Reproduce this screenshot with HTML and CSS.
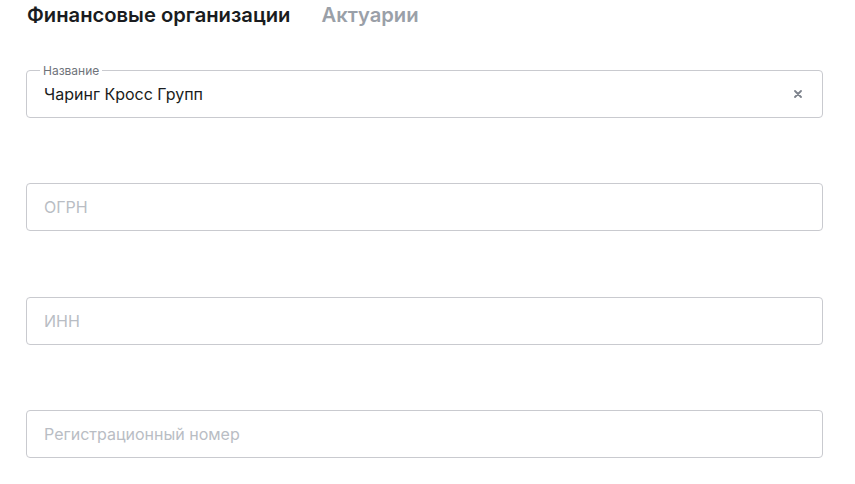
FILE: index.html
```html
<!DOCTYPE html>
<html lang="ru">
<head>
<meta charset="utf-8">
<link rel="stylesheet" href="styles.css">
</head>
<body>
<div class="page">
  <div class="tabs">
    <span class="tab active">Финансовые организации</span>
    <span class="tab">Актуарии</span>
  </div>
  <div class="fields">
    <div class="field filled">
      <span class="label">Название</span>
      <span class="value">Чаринг Кросс Групп</span>
      <span class="clear">
        <svg width="8" height="8" viewBox="0 0 8 8"><path d="M1 1L7 7M7 1L1 7" stroke="#7d828c" stroke-width="1.8" stroke-linecap="round"/></svg>
      </span>
    </div>
    <div class="field"><span class="placeholder">ОГРН</span></div>
    <div class="field"><span class="placeholder">ИНН</span></div>
    <div class="field"><span class="placeholder">Регистрационный номер</span></div>
  </div>
</div>
</body>
</html>
```
FILE: styles.css
```css
html, body {
  margin: 0;
  padding: 0;
  background: #fff;
}
body {
  font-family: Inter, "Noto Sans", sans-serif;
  color: #1a1c20;
}
.page {
  width: 797px;
  padding: 0 0 0 26px;
}
.tabs {
  display: flex;
  gap: 31px;
  height: 28px;
  align-items: center;
  padding-left: 1px;
}
.tab {
  font-size: 20.2px;
  font-weight: 600;
  color: #9aa0a8;
}
.tab.active {
  color: #1a1c20;
}
.fields {
  display: flex;
  flex-direction: column;
  gap: 65.4px;
  margin-top: 42px;
}
.field {
  position: relative;
  height: 46px;
  border: 1px solid #c9cacf;
  border-radius: 4px;
  display: flex;
  align-items: center;
  padding: 0 17px;
}
.placeholder {
  font-size: 16px;
  color: #b9bdc4;
}
.value {
  font-size: 16px;
  color: #1a1c20;
  flex: 1;
}
.label {
  position: absolute;
  left: 13px;
  top: -7px;
  padding: 0 3px;
  background: #fff;
  font-size: 12px;
  color: #6f737a;
  line-height: 13px;
}
.clear {
  display: flex;
  align-items: center;
  margin-right: 3px;
}
```
